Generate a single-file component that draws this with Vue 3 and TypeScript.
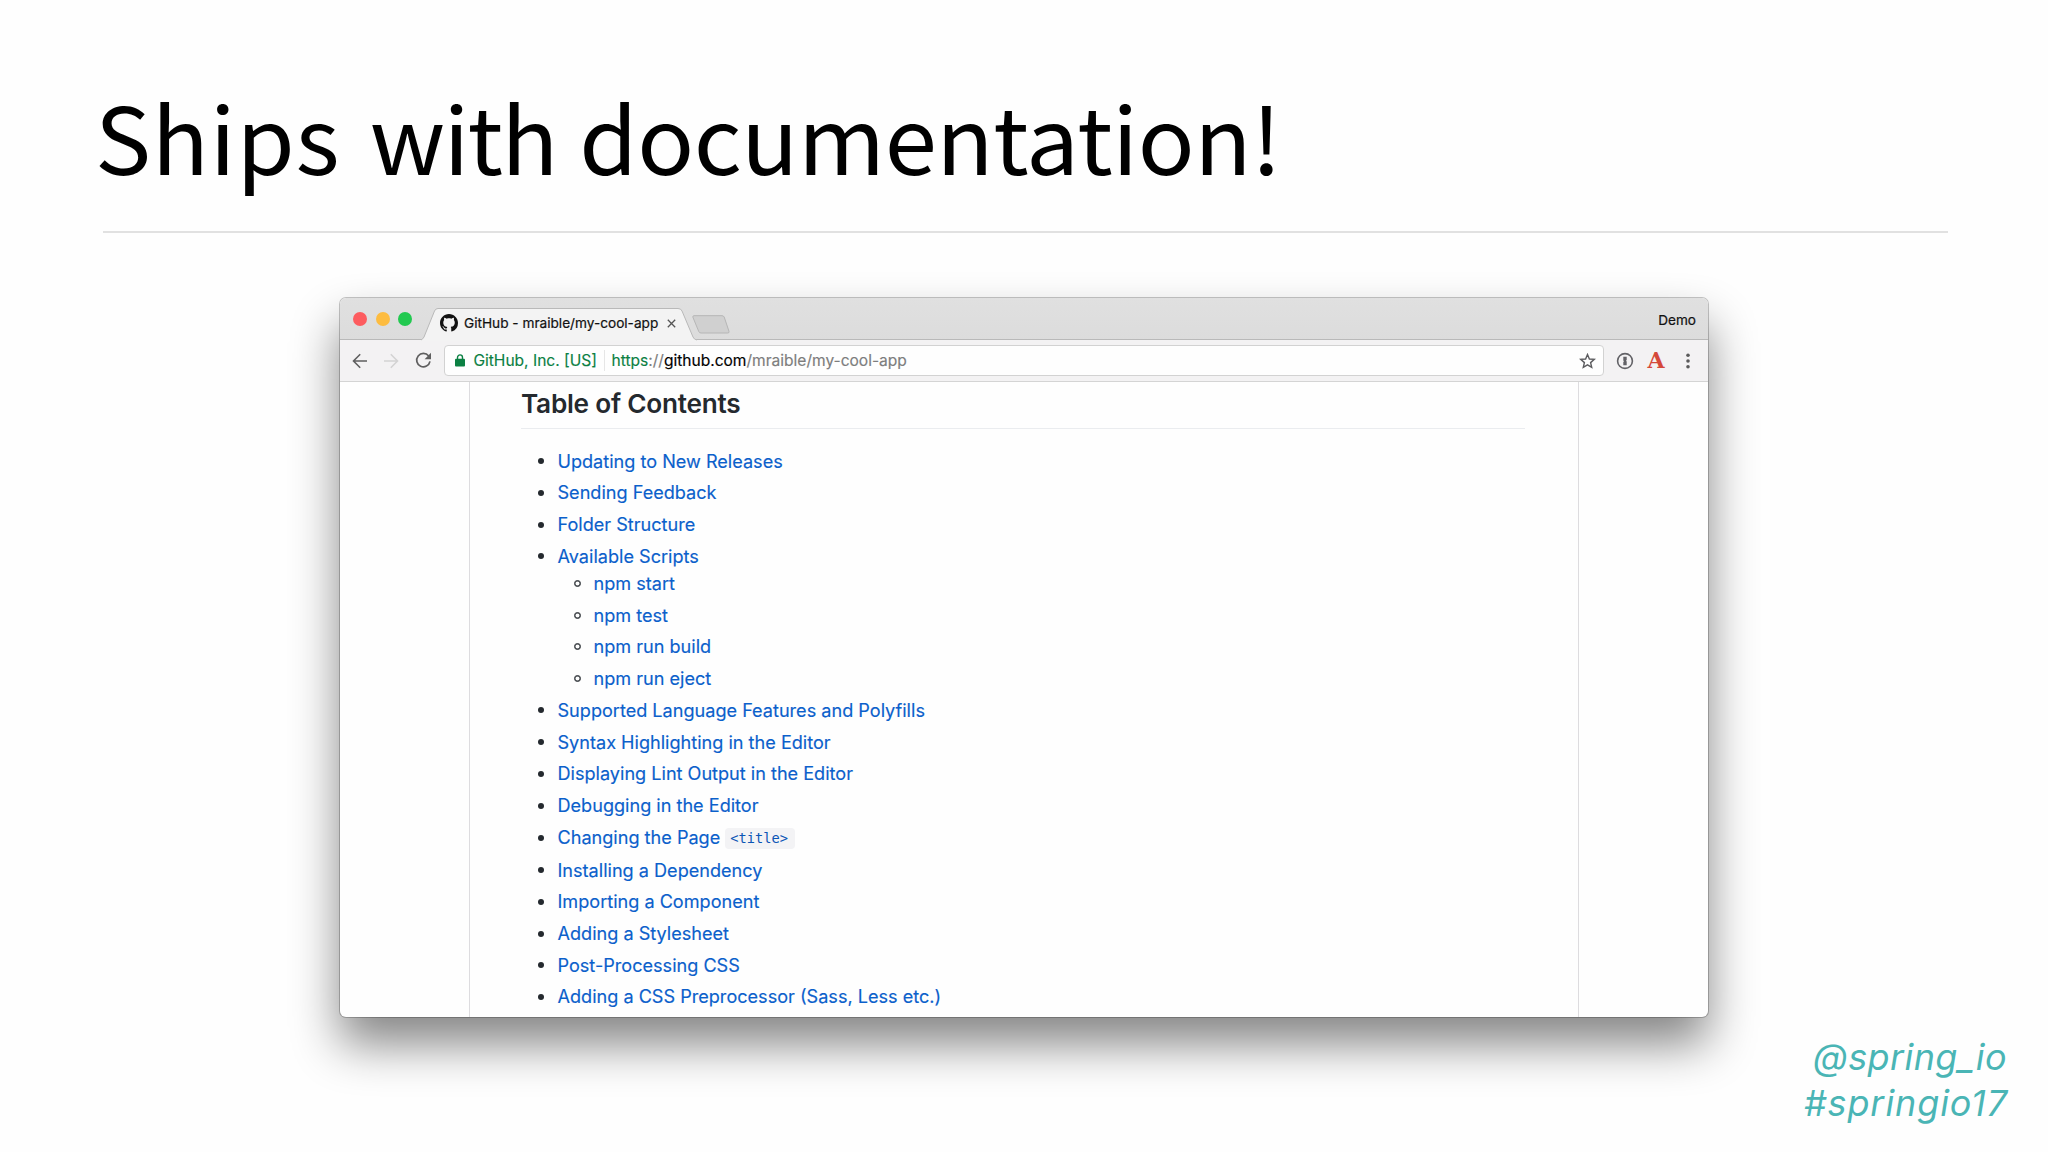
<script setup lang="ts">
interface Entry {
  label: string
  code?: string
  children?: string[]
}

const entries: Entry[] = [
  { label: 'Updating to New Releases' },
  { label: 'Sending Feedback' },
  { label: 'Folder Structure' },
  { label: 'Available Scripts', children: ['npm start', 'npm test', 'npm run build', 'npm run eject'] },
  { label: 'Supported Language Features and Polyfills' },
  { label: 'Syntax Highlighting in the Editor' },
  { label: 'Displaying Lint Output in the Editor' },
  { label: 'Debugging in the Editor' },
  { label: 'Changing the Page', code: '<title>' },
  { label: 'Installing a Dependency' },
  { label: 'Importing a Component' },
  { label: 'Adding a Stylesheet' },
  { label: 'Post-Processing CSS' },
  { label: 'Adding a CSS Preprocessor (Sass, Less etc.)' },
]
</script>

<template>
  <main class="slide">
    <header class="slide-head">
      <h1><span class="w1">Ships</span> <span class="w2">with</span> <span class="w3">documentation!</span></h1>
    </header>

    <section class="browser">
      <div class="tabbar">
        <div class="lights">
          <i class="light red"></i><i class="light amber"></i><i class="light green"></i>
        </div>
        <div class="tab">
          <svg class="tab-shape" width="276" height="33" viewBox="0 0 276 33">
            <path d="M0 32 Q2 31 3 29 L13.5 3 Q14.5 .5 17 .5 H257 Q260 .5 261 3 L272 29 Q273 31.5 276 32 V33 H0 Z" fill="#f3f3f3" />
            <path d="M0 32 Q2 31 3 29 L13.5 3 Q14.5 .5 17 .5 H257 Q260 .5 261 3 L272 29 Q273 31.5 276 32" fill="none" stroke="#b9b9b9" />
          </svg>
          <svg class="favicon" width="18" height="18" viewBox="0 0 16 16">
            <path fill="#111" fill-rule="evenodd" d="M8 0C3.58 0 0 3.58 0 8c0 3.54 2.29 6.53 5.47 7.59.4.07.55-.17.55-.38 0-.19-.01-.82-.01-1.49-2.01.37-2.53-.49-2.69-.94-.09-.23-.48-.94-.82-1.13-.28-.15-.68-.52-.01-.53.63-.01 1.08.58 1.23.82.72 1.21 1.87.87 2.33.66.07-.52.28-.87.51-1.07-1.78-.2-3.64-.89-3.64-3.95 0-.87.31-1.59.82-2.15-.08-.2-.36-1.02.08-2.12 0 0 .67-.21 2.2.82.64-.18 1.32-.27 2-.27s1.36.09 2 .27c1.53-1.04 2.2-.82 2.2-.82.44 1.1.16 1.92.08 2.12.51.56.82 1.27.82 2.15 0 3.07-1.87 3.75-3.65 3.95.29.25.54.73.54 1.48 0 1.07-.01 1.93-.01 2.2 0 .21.15.46.55.38A8.01 8.01 0 0 0 16 8c0-4.42-3.58-8-8-8z" />
          </svg>
          <span class="tab-title">GitHub - mraible/my-cool-app</span>
          <svg class="close" width="9" height="9" viewBox="0 0 9 9">
            <path d="M.8 .8 L8.2 8.2 M8.2 .8 L.8 8.2" stroke="#555" stroke-width="1.3" />
          </svg>
        </div>
        <svg class="new-tab" width="38" height="19" viewBox="0 0 38 19">
          <path d="M2 .7 H30 Q31.6 .7 32.2 2 L37 16.4 Q37.4 18 35.8 18 H9 Q7.4 18 6.8 16.6 L.9 2.2 Q.5 .7 2 .7 Z" fill="#d0d0d0" stroke="#b6b6b6" />
        </svg>
        <span class="profile">Demo</span>
      </div>

      <div class="toolbar">
        <svg class="back" width="16" height="16" viewBox="0 0 16 16" fill="none" stroke="#5f5f5f" stroke-width="1.6">
          <path d="M15 8 H1.8 M8.2 1.3 L1.5 8 L8.2 14.7" />
        </svg>
        <svg class="forward" width="16" height="16" viewBox="0 0 16 16" fill="none" stroke="#d3d3d3" stroke-width="1.6">
          <path d="M1 8 H14.2 M7.8 1.3 L14.5 8 L7.8 14.7" />
        </svg>
        <svg class="reload" width="17" height="17" viewBox="0 0 17 17">
          <path d="M13.7 4 A6.7 6.7 0 1 0 15 9.4" fill="none" stroke="#5f5f5f" stroke-width="1.7" />
          <path d="M16 .8 V7.2 H9.6 Z" fill="#5f5f5f" />
        </svg>
        <div class="omnibox">
          <svg class="lock" width="10" height="13" viewBox="0 0 10 13">
            <path d="M2.5 5.5 V3.4 A2.5 2.5 0 0 1 7.5 3.4 V5.5" fill="none" stroke="#0b8043" stroke-width="1.4" />
            <rect x="0" y="4.8" width="10" height="7.7" rx="1" fill="#0b8043" />
          </svg>
          <span class="issuer">GitHub, Inc. [US]</span>
          <i class="divider"></i>
          <span class="url"><b class="scheme">https</b>://<b class="host">github.com</b>/mraible/my-cool-app</span>
          <svg class="star" width="17" height="16" viewBox="0 0 17 16">
            <path d="M8.5 1.5 L10.4 6 L15.3 6.4 L11.6 9.6 L12.7 14.3 L8.5 11.8 L4.3 14.3 L5.4 9.6 L1.7 6.4 L6.6 6 Z" fill="none" stroke="#5c5c5f" stroke-width="1.4" />
          </svg>
        </div>
        <svg class="onepass" width="18" height="18" viewBox="0 0 18 18">
          <circle cx="9" cy="9" r="7.4" fill="none" stroke="#626266" stroke-width="1.6" />
          <path d="M7.3 4.8 H10.7 V8 L10 8.8 L10.7 9.6 V13.2 H7.3 V10 L8 9.2 L7.3 8.4 Z" fill="#626266" />
        </svg>
        <span class="ext">A</span>
        <svg class="menu" width="4" height="16" viewBox="0 0 4 16" fill="#5a5a5a">
          <circle cx="2" cy="2.2" r="1.8" /><circle cx="2" cy="8" r="1.8" /><circle cx="2" cy="13.8" r="1.8" />
        </svg>
      </div>

      <div class="viewport">
        <article class="readme">
          <h2>Table of Contents</h2>
          <ul class="toc">
            <li v-for="e in entries" :key="e.label">
              <div class="row" :class="{ tall: e.code }">
                <i class="disc"></i>
                <a>{{ e.label }}</a>
                <code v-if="e.code">{{ e.code }}</code>
              </div>
              <ul v-if="e.children" class="sub">
                <li v-for="c in e.children" :key="c">
                  <div class="row"><i class="ring"></i><a>{{ c }}</a></div>
                </li>
              </ul>
            </li>
          </ul>
        </article>
      </div>
    </section>

    <footer class="handles">
      <span class="at">@spring_io</span>
      <span class="hash">#springio17</span>
    </footer>
  </main>
</template>

<style>
body { margin: 0; background: #fefefe; }
</style>

<style scoped>
.slide {
  position: relative;
  box-sizing: border-box;
  width: 2048px;
  height: 1152px;
  overflow: hidden;
  background: #fefefe;
  font-family: Inter, "Liberation Sans", sans-serif;
}
.slide-head {
  box-sizing: border-box;
  height: 233px;
  margin: 0 100px 0 103px;
  border-bottom: 2px solid #e1e1e1;
}
h1 {
  margin: 0 0 0 -8px;
  padding-top: 75px;
  font: 400 92px/120px "Noto Sans CJK SC", sans-serif;
  color: #000;
  white-space: nowrap;
  transform: scaleX(1.022);
  transform-origin: 0 0;
}
.w1 { letter-spacing: .8px; }
.w2 { margin-left: 8.2px; letter-spacing: -1.7px; }
.w3 { margin-left: 1.6px; letter-spacing: -.4px; }
.browser {
  width: 1368px;
  height: 719px;
  margin: 65px 0 0 340px;
  display: flex;
  flex-direction: column;
  border-radius: 6px;
  background: #fefefe;
  box-shadow: 0 0 0 1px rgba(0, 0, 0, .22), 0 27px 48px rgba(0, 0, 0, .48);
}
.tabbar {
  box-sizing: border-box;
  height: 42px;
  display: flex;
  border-bottom: 1px solid #b9b9b9;
  border-radius: 6px 6px 0 0;
  background: linear-gradient(#e0e0e0, #dcdcdc);
}
.lights { display: flex; gap: 8.7px; padding: 14px 0 0 13px; width: 68px; }
.light { width: 14px; height: 14px; border-radius: 50%; }
.red { background: #fd5c5f; }
.amber { background: #fdbc40; }
.green { background: #22c950; }
.tab { position: relative; display: flex; align-items: center; box-sizing: border-box; width: 276px; height: 33px; margin-top: 10px; padding-bottom: 3px; }
.tab-shape { position: absolute; left: 0; top: 0; }
.favicon { position: relative; margin-left: 18.5px; }
.tab-title { position: relative; margin-left: 6.5px; width: 203px; font-size: 13.65px; white-space: nowrap; color: #111; -webkit-text-stroke: .2px #111; }
.close { position: relative; }
.new-tab { margin: 17px 0 0 -5px; }
.profile { margin-left: auto; padding-right: 12px; font-size: 13.6px; line-height: 44px; color: #111; -webkit-text-stroke: .2px #111; }
.toolbar {
  box-sizing: border-box;
  height: 42px;
  display: flex;
  align-items: center;
  border-bottom: 1px solid #d4d4d4;
  background: #f3f2f3;
}
.back { margin-left: 12px; }
.forward { margin-left: 15px; }
.reload { margin-left: 16px; }
.omnibox {
  box-sizing: border-box;
  width: 1159.5px;
  height: 31px;
  margin-left: 12px;
  display: flex;
  align-items: center;
  border: 1px solid #d2d2d2;
  border-radius: 4px;
  background: #fefefe;
  font-size: 15.55px;
  white-space: nowrap;
}
.lock { margin-left: 10px; }
.issuer { margin-left: 8.4px; width: 130.6px; color: #0b8043; -webkit-text-stroke: .15px; }
.divider { width: 1px; height: 21px; background: #e6e6e6; }
.url { margin-left: 6.5px; color: #7d7d7d; -webkit-text-stroke: .15px; }
.url b { font-weight: 400; }
.url .scheme { color: #0b8043; }
.url .host { color: #000; }
.star { margin: 0 7px 0 auto; }
.onepass { margin-left: 12px; }
.ext { margin-left: 14px; width: 18px; font: 700 22px/28px "DejaVu Serif", serif; position: relative; top: -1px; color: #d5493a; }
.menu { margin-left: 20.5px; }
.viewport { flex: 1; min-height: 0; overflow: hidden; border-radius: 0 0 6px 6px; }
.readme {
  box-sizing: border-box;
  width: 1110px;
  height: 100%;
  margin-left: 129px;
  padding: 5px 53px 0 51px;
  border: solid #dddcdf;
  border-width: 0 1px;
  color: #24292e;
}
h2 {
  box-sizing: border-box;
  height: 42px;
  margin: 0;
  border-bottom: 1px solid #eaecef;
  font-size: 26.2px;
  letter-spacing: -.25px;
  line-height: 33px;
  font-weight: 600;
}
ul { list-style: none; margin: 0; padding: 0; }
.toc { padding-top: 18.7px; font-size: 18.1px; line-height: 27.2px; }
.toc li + li { margin-top: 4.53px; }
.row { display: flex; align-items: center; height: 27.2px; padding-left: 17px; white-space: nowrap; }
.row.tall { height: 28.4px; }
.row a { color: #0b60cb; -webkit-text-stroke: .15px #0b60cb; }
.disc { width: 6px; height: 6px; margin-right: 13.5px; border-radius: 50%; background: #24292e; }
.sub { padding-left: 36px; }
.ring { box-sizing: border-box; width: 7px; height: 7px; margin: 0 13px 0 -.5px; border: 1px solid #24292e; border-radius: 50%; box-shadow: inset 0 0 0 .4px #24292e; }
code {
  margin-left: 5px;
  padding: 0 7px 0 5px;
  border-radius: 4px;
  background: #f3f3f5;
  font: 13.7px/21px "DejaVu Sans Mono", monospace;
  color: #0b55b5;
  position: relative;
  top: 1px;
}
.handles {
  position: absolute;
  right: 41px;
  top: 1034px;
  display: flex;
  flex-direction: column;
  align-items: flex-end;
  font-size: 36px;
  line-height: 46px;
  font-style: italic;
  color: #4ab5b5;
}
.at { letter-spacing: .4px; }
.hash { letter-spacing: .9px; margin-right: -1px; }
</style>
